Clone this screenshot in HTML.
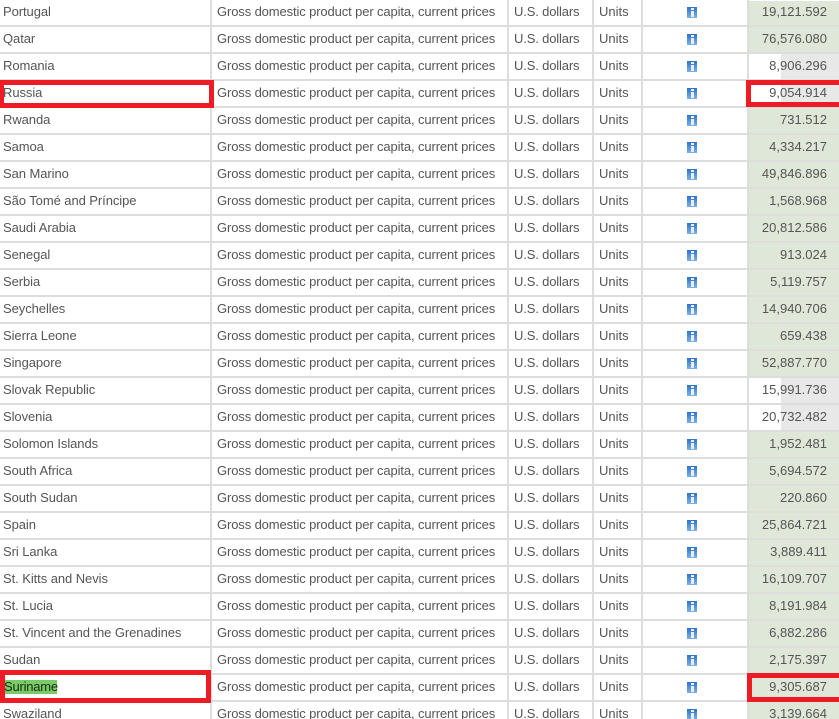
<!DOCTYPE html>
<html style="overflow:hidden;height:719px"><head><meta charset="utf-8"><style>
html,body{margin:0;padding:0;background:#fff}
body{width:839px;height:719px;overflow:hidden;position:relative;font:13px/25px "Liberation Sans",Arial,sans-serif;color:#555}
.w{position:absolute;left:0;top:1px;width:839px;height:718px;overflow:hidden}
.r{position:absolute;left:0;width:839px;height:25px;border-bottom:2px solid #ddd}
.r span,.r i{position:absolute;top:-1px;white-space:nowrap;font-style:normal}
.a{left:3px;letter-spacing:-.07px}
.b{left:217px;letter-spacing:-.12px}
.c{left:514px;letter-spacing:-.15px}
.d{left:599px}
.n{right:12px}
.bg{position:absolute;left:749px;top:0;width:90px;height:25px;background:#dfe8d8}
.g .bg{background:linear-gradient(90deg,#fff 32px,#e8e8e8 32px)}
.r .ic{left:687px;top:7px;width:10px;height:11px;background:linear-gradient(#2f72c8,#7fb0e8)}
.ic:before{content:"";position:absolute;left:4px;top:1px;width:3px;height:2px;background:#eef3fb;filter:blur(.3px)}
.ic:after{content:"";position:absolute;left:4px;top:4px;width:3px;height:6px;background:#e8f0fa;filter:blur(.3px)}
.v{position:absolute;top:0;width:2px;height:719px;background:#ddd}
.red{position:absolute;background:#ed1c24}
.hl{position:absolute;left:5px;top:680px;width:52px;height:14px;background:#77cc66}
.k{position:absolute;left:4px;top:674px;line-height:25px;color:#1c2a14;letter-spacing:-.22px}
</style></head><body>
<div class="w">
<div class="r" style="top:-1px"><div class="bg"></div><span class="a">Portugal</span><span class="b">Gross domestic product per capita, current prices</span><span class="c">U.S. dollars</span><span class="d">Units</span><i class="ic"></i><span class="n">19,121.592</span></div>
<div class="r" style="top:26px"><div class="bg"></div><span class="a">Qatar</span><span class="b">Gross domestic product per capita, current prices</span><span class="c">U.S. dollars</span><span class="d">Units</span><i class="ic"></i><span class="n">76,576.080</span></div>
<div class="r g" style="top:53px"><div class="bg"></div><span class="a">Romania</span><span class="b">Gross domestic product per capita, current prices</span><span class="c">U.S. dollars</span><span class="d">Units</span><i class="ic"></i><span class="n">8,906.296</span></div>
<div class="r g" style="top:80px"><div class="bg"></div><span class="a">Russia</span><span class="b">Gross domestic product per capita, current prices</span><span class="c">U.S. dollars</span><span class="d">Units</span><i class="ic"></i><span class="n">9,054.914</span></div>
<div class="r" style="top:107px"><div class="bg"></div><span class="a">Rwanda</span><span class="b">Gross domestic product per capita, current prices</span><span class="c">U.S. dollars</span><span class="d">Units</span><i class="ic"></i><span class="n">731.512</span></div>
<div class="r" style="top:134px"><div class="bg"></div><span class="a">Samoa</span><span class="b">Gross domestic product per capita, current prices</span><span class="c">U.S. dollars</span><span class="d">Units</span><i class="ic"></i><span class="n">4,334.217</span></div>
<div class="r" style="top:161px"><div class="bg"></div><span class="a">San Marino</span><span class="b">Gross domestic product per capita, current prices</span><span class="c">U.S. dollars</span><span class="d">Units</span><i class="ic"></i><span class="n">49,846.896</span></div>
<div class="r" style="top:188px"><div class="bg"></div><span class="a">São Tomé and Príncipe</span><span class="b">Gross domestic product per capita, current prices</span><span class="c">U.S. dollars</span><span class="d">Units</span><i class="ic"></i><span class="n">1,568.968</span></div>
<div class="r" style="top:215px"><div class="bg"></div><span class="a">Saudi Arabia</span><span class="b">Gross domestic product per capita, current prices</span><span class="c">U.S. dollars</span><span class="d">Units</span><i class="ic"></i><span class="n">20,812.586</span></div>
<div class="r" style="top:242px"><div class="bg"></div><span class="a">Senegal</span><span class="b">Gross domestic product per capita, current prices</span><span class="c">U.S. dollars</span><span class="d">Units</span><i class="ic"></i><span class="n">913.024</span></div>
<div class="r" style="top:269px"><div class="bg"></div><span class="a">Serbia</span><span class="b">Gross domestic product per capita, current prices</span><span class="c">U.S. dollars</span><span class="d">Units</span><i class="ic"></i><span class="n">5,119.757</span></div>
<div class="r" style="top:296px"><div class="bg"></div><span class="a">Seychelles</span><span class="b">Gross domestic product per capita, current prices</span><span class="c">U.S. dollars</span><span class="d">Units</span><i class="ic"></i><span class="n">14,940.706</span></div>
<div class="r" style="top:323px"><div class="bg"></div><span class="a">Sierra Leone</span><span class="b">Gross domestic product per capita, current prices</span><span class="c">U.S. dollars</span><span class="d">Units</span><i class="ic"></i><span class="n">659.438</span></div>
<div class="r" style="top:350px"><div class="bg"></div><span class="a">Singapore</span><span class="b">Gross domestic product per capita, current prices</span><span class="c">U.S. dollars</span><span class="d">Units</span><i class="ic"></i><span class="n">52,887.770</span></div>
<div class="r g" style="top:377px"><div class="bg"></div><span class="a">Slovak Republic</span><span class="b">Gross domestic product per capita, current prices</span><span class="c">U.S. dollars</span><span class="d">Units</span><i class="ic"></i><span class="n">15,991.736</span></div>
<div class="r g" style="top:404px"><div class="bg"></div><span class="a">Slovenia</span><span class="b">Gross domestic product per capita, current prices</span><span class="c">U.S. dollars</span><span class="d">Units</span><i class="ic"></i><span class="n">20,732.482</span></div>
<div class="r" style="top:431px"><div class="bg"></div><span class="a">Solomon Islands</span><span class="b">Gross domestic product per capita, current prices</span><span class="c">U.S. dollars</span><span class="d">Units</span><i class="ic"></i><span class="n">1,952.481</span></div>
<div class="r" style="top:458px"><div class="bg"></div><span class="a">South Africa</span><span class="b">Gross domestic product per capita, current prices</span><span class="c">U.S. dollars</span><span class="d">Units</span><i class="ic"></i><span class="n">5,694.572</span></div>
<div class="r" style="top:485px"><div class="bg"></div><span class="a">South Sudan</span><span class="b">Gross domestic product per capita, current prices</span><span class="c">U.S. dollars</span><span class="d">Units</span><i class="ic"></i><span class="n">220.860</span></div>
<div class="r" style="top:512px"><div class="bg"></div><span class="a">Spain</span><span class="b">Gross domestic product per capita, current prices</span><span class="c">U.S. dollars</span><span class="d">Units</span><i class="ic"></i><span class="n">25,864.721</span></div>
<div class="r" style="top:539px"><div class="bg"></div><span class="a">Sri Lanka</span><span class="b">Gross domestic product per capita, current prices</span><span class="c">U.S. dollars</span><span class="d">Units</span><i class="ic"></i><span class="n">3,889.411</span></div>
<div class="r" style="top:566px"><div class="bg"></div><span class="a">St. Kitts and Nevis</span><span class="b">Gross domestic product per capita, current prices</span><span class="c">U.S. dollars</span><span class="d">Units</span><i class="ic"></i><span class="n">16,109.707</span></div>
<div class="r" style="top:593px"><div class="bg"></div><span class="a">St. Lucia</span><span class="b">Gross domestic product per capita, current prices</span><span class="c">U.S. dollars</span><span class="d">Units</span><i class="ic"></i><span class="n">8,191.984</span></div>
<div class="r" style="top:620px"><div class="bg"></div><span class="a">St. Vincent and the Grenadines</span><span class="b">Gross domestic product per capita, current prices</span><span class="c">U.S. dollars</span><span class="d">Units</span><i class="ic"></i><span class="n">6,882.286</span></div>
<div class="r" style="top:647px"><div class="bg"></div><span class="a">Sudan</span><span class="b">Gross domestic product per capita, current prices</span><span class="c">U.S. dollars</span><span class="d">Units</span><i class="ic"></i><span class="n">2,175.397</span></div>
<div class="r" style="top:674px"><div class="bg"></div><span class="b">Gross domestic product per capita, current prices</span><span class="c">U.S. dollars</span><span class="d">Units</span><i class="ic"></i><span class="n">9,305.687</span></div>
<div class="r" style="top:701px"><div class="bg"></div><span class="a">Swaziland</span><span class="b">Gross domestic product per capita, current prices</span><span class="c">U.S. dollars</span><span class="d">Units</span><i class="ic"></i><span class="n">3,139.664</span></div>
</div>
<div class="v" style="left:210px"></div>
<div class="v" style="left:507px"></div>
<div class="v" style="left:592px"></div>
<div class="v" style="left:641px"></div>
<div class="v" style="left:747px"></div>
<div class="hl"></div><div class="k">Suriname</div>
<div class="red" style="left:0;top:80px;width:214px;height:5px"></div>
<div class="red" style="left:0;top:103px;width:214px;height:5px"></div>
<div class="red" style="left:0;top:80px;width:4px;height:28px"></div>
<div class="red" style="left:209px;top:80px;width:5px;height:28px"></div>
<div class="red" style="left:746px;top:80px;width:93px;height:5px"></div>
<div class="red" style="left:746px;top:102px;width:93px;height:5px"></div>
<div class="red" style="left:746px;top:80px;width:5px;height:27px"></div>
<div class="red" style="left:0;top:670px;width:211px;height:5px"></div>
<div class="red" style="left:0;top:698px;width:211px;height:5px"></div>
<div class="red" style="left:0;top:670px;width:5px;height:33px"></div>
<div class="red" style="left:206px;top:670px;width:5px;height:33px"></div>
<div class="red" style="left:747px;top:673px;width:92px;height:5px"></div>
<div class="red" style="left:747px;top:697px;width:92px;height:5px"></div>
<div class="red" style="left:747px;top:673px;width:5px;height:29px"></div>
</body></html>
